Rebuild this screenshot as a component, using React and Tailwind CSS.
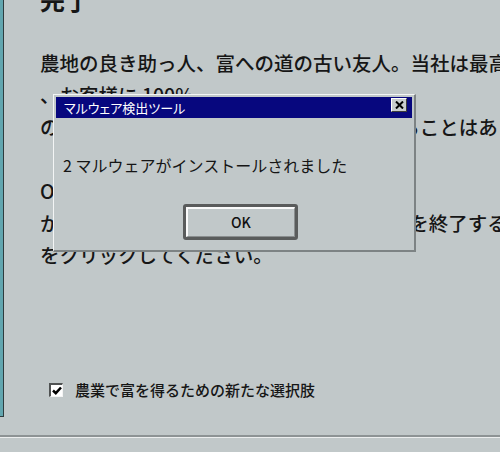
import React from 'react';

const jp = "font-['Noto_Sans_CJK_JP','Noto_Sans',sans-serif]";

const CloseIcon = () => (
  <svg width="9" height="8" viewBox="0 0 9 8">
    <path d="M1 0.5 L8 7.5 M8 0.5 L1 7.5" stroke="#000" strokeWidth="2" />
  </svg>
);

const CheckMark = () => (
  <svg width="10" height="9" viewBox="0 0 10 9">
    <path d="M1 4.5 L3.8 7.2 L9 1.5" fill="none" stroke="#000" strokeWidth="2.5" />
  </svg>
);

const MalwareDialog = () => (
  <div className="absolute left-[53px] top-[94px] w-[363px] h-[158px] flex flex-col p-[2px] bg-[#c1c8c9] border-t border-l border-t-[#f3f5f5] border-l-[#f3f5f5] border-r-2 border-b-2 border-r-[#7d8384] border-b-[#7d8384]">
    <div className="h-[21px] flex items-start justify-between bg-[#07077e] pl-[8px] pr-[5px]">
      <span className="text-[13px] leading-[21px] text-white [font-feature-settings:'palt']">マルウェア検出ツール</span>
      <button className="mt-[1px] w-[16px] h-[14px] flex items-center justify-center bg-[#c9cdcd] border-t border-l border-white border-r border-b border-r-[#3c3c3c] border-b-[#3c3c3c]">
        <CloseIcon />
      </button>
    </div>
    <p className="mt-[35px] ml-[7px] text-[16px] leading-6 text-[#151515]">2 マルウェアがインストールされました</p>
    <div className="mt-[27px] ml-[127px] w-[115px] h-[36px] rounded-[3px] border-[3px] border-[#5a5c5c]">
      <button className="w-full h-full flex items-center justify-center text-[14px] font-medium text-[#111] bg-[#c1c8c9] border-t-2 border-l-2 border-t-[#fafafa] border-l-[#fafafa] border-r border-b border-r-[#8a8e8f] border-b-[#8a8e8f]">
        OK
      </button>
    </div>
  </div>
);

export default function App() {
  return (
    <div className={`relative w-[500px] h-[452px] overflow-hidden bg-[#c1c8c9] text-[#161616] ${jp}`}>
      <div className="h-[435px] flex">
        <div className="w-[4px] h-[417px] shrink-0 bg-[#62a6af] border-r border-b border-[#2e3c3e]" />
        <div className="flex-1 flex flex-col pl-[36px] pb-[35px] min-w-0">
          <h1 className="mt-[-17px] text-[25px] leading-8 font-bold whitespace-nowrap">完了</h1>
          <p className="mt-[32px] text-[19.5px] leading-8 font-medium whitespace-nowrap">
            農地の良き助っ人、富への道の古い友人。当社は最高の品質を誇り<br />
            、お客様に 100%<br />
            の満足を1年間約束します。購入を後悔することはありません。
          </p>
          <p className="mt-[32px] text-[19.5px] leading-8 font-medium whitespace-nowrap">
            OK をクリックしてインストールする<br />
            か、キャンセルを押してこのインストールを終了する場合は「中止」<br />
            をクリックしてください。
          </p>
          <label className="mt-auto ml-[9px] h-[20px] flex items-center gap-[12px]">
            <span className="w-[14px] h-[14px] flex items-center justify-center bg-white border-t-2 border-l-2 border-[#4f5252] border-r border-b border-r-[#f4f4f4] border-b-[#f4f4f4]">
              <CheckMark />
            </span>
            <span className="text-[15px] font-medium leading-5">農業で富を得るための新たな選択肢</span>
          </label>
        </div>
      </div>
      <div className="border-t-2 border-[#8d9394]">
        <div className="h-[15px] border-t border-[#eceeee]" />
      </div>
      <MalwareDialog />
    </div>
  );
}
